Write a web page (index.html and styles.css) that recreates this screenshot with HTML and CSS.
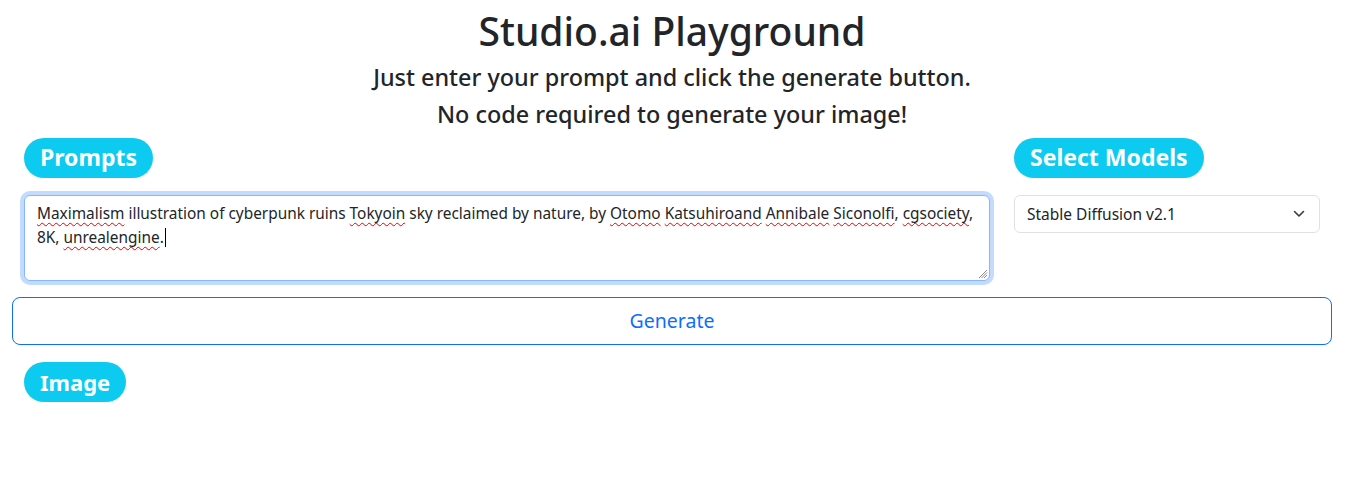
FILE: index.html
```html
<!DOCTYPE html>
<html lang="en">
<head>
<meta charset="utf-8">
<title>Studio.ai Playground</title>
<link rel="stylesheet" href="styles.css">
</head>
<body>
<div class="page">
  <header class="hero">
    <h1 class="title">Studio.ai Playground</h1>
    <h4 class="subtitle">Just enter your prompt and click the generate button.</h4>
    <h4 class="subtitle">No code required to generate your image!</h4>
  </header>

  <div class="row">
    <div class="col-main">
      <h2 class="heading"><span class="pill">Prompts</span></h2>
      <div class="textarea focused"><span class="sp">Maximalism</span> illustration of cyberpunk ruins <span class="sp">Tokyoin</span> sky reclaimed by nature, by <span class="sp">Otomo</span> <span class="sp">Katsuhiroand</span> <span class="sp">Annibale</span> <span class="sp">Siconolfi</span>, <span class="sp">cgsociety</span>, 8K, <span class="sp">unrealengine</span>.<span class="caret"></span><svg class="grip" width="10" height="10" viewBox="0 0 10 10"><path d="M9 1 1 9M9 3.5 3.5 9M9 6 6 9" stroke="#8a8a8a" stroke-width="1" fill="none"/></svg></div>
    </div>
    <div class="col-side">
      <h2 class="heading"><span class="pill">Select Models</span></h2>
      <div class="select-wrap">
        <select class="select">
          <option>Stable Diffusion v2.1</option>
        </select>
        <svg class="chevron" width="12" height="8" viewBox="0 0 12 8"><path d="m1.5 1.5 4.5 4.5 4.5-4.5" fill="none" stroke="#343a40" stroke-linecap="round" stroke-linejoin="round" stroke-width="1.6"/></svg>
      </div>
    </div>
  </div>

  <button class="btn-generate" type="button">Generate</button>

  <div class="image-section">
    <h2 class="heading"><span class="pill pill-sm">Image</span></h2>
  </div>
</div>
</body>
</html>
```

FILE: styles.css
```css
* { box-sizing: border-box; }

html, body {
  margin: 0;
  padding: 0;
  background: #fff;
}

body {
  font-family: "Noto Sans", "Open Sans", sans-serif;
  color: #212529;
  font-size: 16px;
  line-height: 1.5;
}

.page {
  padding: 0 13px 0 12px;
}

.hero {
  text-align: center;
  padding-top: 7px;
}

.title {
  margin: 0 0 9px;
  font-size: 39px;
  font-weight: 500;
  line-height: 47px;
}

.subtitle {
  margin: 0 0 8px;
  font-size: 23.4px;
  font-weight: 500;
  line-height: 29px;
}

.row {
  display: grid;
  grid-template-columns: 3fr 1fr;
  padding-top: 1px;
}

.col-main,
.col-side {
  padding: 0 12px;
}

.heading {
  margin: 0 0 17px;
  font-size: 32px;
  line-height: 1;
}

.pill {
  display: inline-block;
  background: #0dcaf0;
  color: #fff;
  font-size: 23px;
  font-weight: 700;
  line-height: 1;
  padding: 8px 16px;
  height: 40px;
  border-radius: 50rem;
  white-space: nowrap;
}

.pill-sm {
  font-size: 22px;
  padding: 9px 16px 8px;
}

.textarea {
  position: relative;
  height: 86px;
  padding: 6px 12px;
  font-size: 15.4px;
  line-height: 24px;
  color: #212529;
  background: #fff;
  border: 1px solid #86b7fe;
  border-radius: 6px;
}

.textarea.focused {
  box-shadow: 0 0 0 4px rgba(13, 110, 253, 0.25);
}

.sp {
  text-decoration: underline wavy #e00;
  text-decoration-thickness: 1px;
  text-underline-offset: 3px;
  text-decoration-skip-ink: none;
}

.caret {
  display: inline-block;
  width: 1px;
  height: 19px;
  background: #000;
  vertical-align: -4px;
  margin-left: 1px;
}

.grip {
  position: absolute;
  right: 1px;
  bottom: 1px;
}

.select-wrap {
  position: relative;
}

.select {
  display: block;
  width: 100%;
  height: 38px;
  padding: 6px 36px 6px 12px;
  font-family: inherit;
  font-size: 15.5px;
  line-height: 24px;
  color: #212529;
  background: #fff;
  border: 1px solid #dee2e6;
  border-radius: 6px;
  appearance: none;
  -webkit-appearance: none;
}

.chevron {
  position: absolute;
  right: 15px;
  top: 15px;
  pointer-events: none;
}

.btn-generate {
  display: block;
  width: 100%;
  margin-top: 16px;
  height: 48px;
  padding: 8px 16px;
  font-family: inherit;
  font-size: 19.5px;
  line-height: 30px;
  color: #0d6efd;
  background: transparent;
  border: 1px solid #0d6efd;
  border-radius: 8px;
}

.image-section {
  padding: 17px 12px 0;
}
```
